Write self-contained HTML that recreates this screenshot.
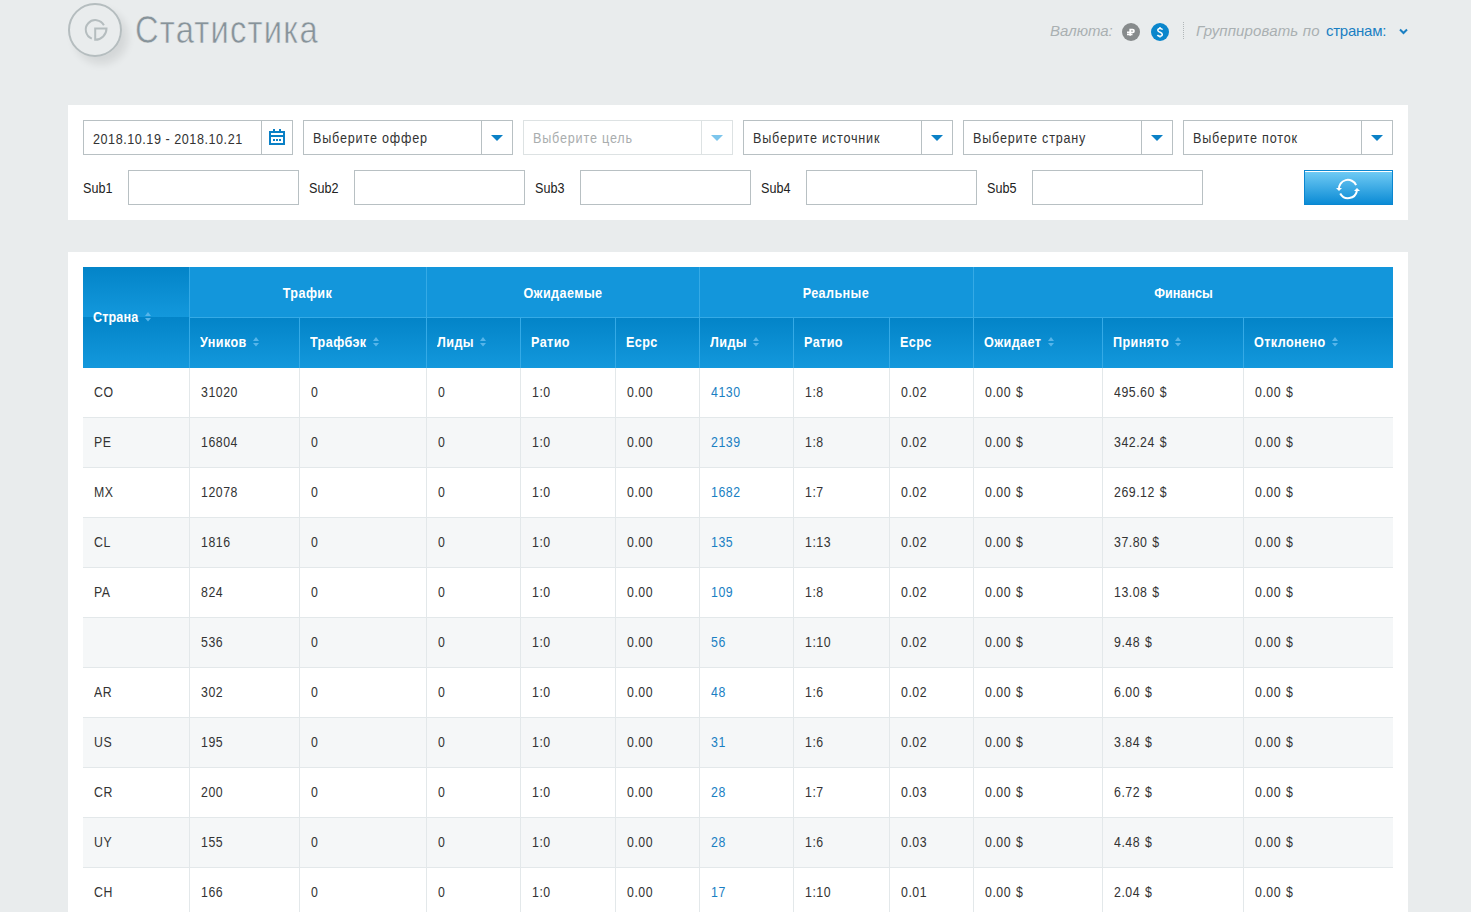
<!DOCTYPE html>
<html><head><meta charset="utf-8"><title>Статистика</title>
<style>
*{margin:0;padding:0;box-sizing:border-box}
html,body{width:1471px;height:912px;overflow:hidden;background:#e9eced;font-family:"Liberation Sans",sans-serif;position:relative}
.a{position:absolute}
.t{position:absolute;white-space:nowrap;line-height:1}
.panel{position:absolute;background:#fff}
.sel{position:absolute;border:1px solid #b8c0c3;background:#fff}
.sel .div{position:absolute;top:0;bottom:0;left:177px;width:1px;background:#b8c0c3}
.sel .arr{position:absolute;left:187px;top:14px;width:0;height:0;border-left:6px solid transparent;border-right:6px solid transparent;border-top:6px solid #0a80c6}
.sel .txt{position:absolute;left:9px;top:10px;font-size:14px;letter-spacing:0.9px;transform:scaleX(0.9);transform-origin:0 0;color:#333;white-space:nowrap;line-height:1}
.sel.dis{border-color:#dde2e3}
.sel.dis .div{background:#dde2e3}
.sel.dis .arr{border-top-color:#7cc5ec}
.sel.dis .txt{color:#a9adae}
.inp{position:absolute;border:1px solid #b8c0c3;background:#fff}
.lab{position:absolute;font-size:15px;transform:scaleX(0.84);transform-origin:0 0;color:#222;white-space:nowrap;line-height:1}
.hc{position:absolute;color:#fff;font-weight:bold;font-size:14px;white-space:nowrap;line-height:1}
.hs{display:inline-block;letter-spacing:0.45px;transform:scaleX(0.9);transform-origin:0 0}
.hg{display:inline-block;letter-spacing:0.45px;transform:scaleX(0.9);transform-origin:50% 0}
.cell{position:absolute;font-size:14px;letter-spacing:0.6px;word-spacing:1px;transform:scaleX(0.88);transform-origin:0 0;color:#333;white-space:nowrap;line-height:1}
.sort{position:absolute}
</style></head><body>

<div class="a" style="left:68px;top:3px;width:54px;height:54px;border-radius:50%;box-shadow:6px 7px 8px rgba(0,0,0,0.09)"></div>
<svg class="a" style="left:68px;top:3px" width="54" height="54" viewBox="0 0 54 54">
<circle cx="27" cy="27" r="26" fill="none" stroke="#b5bdbf" stroke-width="2"/>
<path d="M35.9 22.3 A9.6 9.6 0 1 0 23.8 35.6" fill="none" stroke="#b5bdbf" stroke-width="2"/>
<path d="M27.2 25.5 H38.5 A11.3 11.3 0 0 1 27.2 36.8 Z" fill="none" stroke="#b5bdbf" stroke-width="2"/>
</svg>
<div class="t" style="left:135px;top:11px;font-size:38.5px;letter-spacing:1.4px;transform:scaleX(0.85);transform-origin:0 0;color:#87939a;-webkit-text-stroke:0.55px #e9eced">Статистика</div>
<div class="t" style="left:1050px;top:23px;font-size:15px;font-style:italic;color:#a9b0b2">Валюта:</div>
<div class="a" style="left:1122px;top:23px;width:18px;height:18px;border-radius:50%;background:#878b8c"></div>
<svg class="a" style="left:1122px;top:23px" width="18" height="18" viewBox="0 0 18 18"><path d="M8.2 12.8V6.6H10.6A1.4 1.4 0 0 1 10.6 9.4H5 M5 11.5H10.5" fill="none" stroke="#fff" stroke-width="1.7"/></svg>
<div class="a" style="left:1151px;top:23px;width:18px;height:18px;border-radius:50%;background:#0a86cc"></div>
<svg class="a" style="left:1151px;top:23px" width="18" height="18" viewBox="0 0 18 18"><path d="M11.6 6.6 C11 5.7 10 5.4 9 5.4 C7.6 5.4 6.8 6.2 6.8 7.2 C6.8 8.3 7.8 8.8 9.1 9.3 C10.5 9.9 11.3 10.5 11.3 11.6 C11.3 12.7 10.3 13.3 9 13.3 C7.9 13.3 7 12.9 6.4 12 M9 4 V5.4 M9 13.3 V14.4" fill="none" stroke="#fff" stroke-width="1.5"/></svg>
<div class="a" style="left:1183px;top:22px;width:1px;height:17px;background-image:linear-gradient(#b0b6b8 50%,transparent 50%);background-size:1px 2px"></div>
<div class="t" style="left:1196px;top:23px;font-size:15px;letter-spacing:0.15px;font-style:italic;color:#a9b0b2">Группировать по</div>
<div class="t" style="left:1326px;top:23px;font-size:15px;letter-spacing:-0.25px;color:#1a7fc3">странам:</div>
<svg class="a" style="left:1399px;top:28px" width="9" height="7" viewBox="0 0 9 7"><path d="M1 1.5L4.5 5L8 1.5" fill="none" stroke="#1a7fc3" stroke-width="2"/></svg>
<div class="panel" style="left:68px;top:105px;width:1340px;height:115px"></div>
<div class="sel" style="left:83px;top:120px;width:210px;height:35px"><div class="div"></div><div class="txt" style="left:9px;top:11px;letter-spacing:0.6px">2018.10.19 - 2018.10.21</div>
<svg class="a" style="left:185px;top:8px" width="16" height="16" viewBox="0 0 16 16"><path d="M0 2H16V16H0Z M2 4V6H14V4Z M2 8V14H14V8Z M4 0H6V2H4Z M10 0H12V2H10Z M4 10H6V12H4Z M7 10H9V12H7Z M10 10H12V12H10Z" fill="#0a80c6" fill-rule="evenodd"/></svg></div>
<div class="sel" style="left:303px;top:120px;width:210px;height:35px"><div class="div"></div><div class="arr"></div><div class="txt">Выберите оффер</div></div>
<div class="sel dis" style="left:523px;top:120px;width:210px;height:35px"><div class="div"></div><div class="arr"></div><div class="txt">Выберите цель</div></div>
<div class="sel" style="left:743px;top:120px;width:210px;height:35px"><div class="div"></div><div class="arr"></div><div class="txt">Выберите источник</div></div>
<div class="sel" style="left:963px;top:120px;width:210px;height:35px"><div class="div"></div><div class="arr"></div><div class="txt">Выберите страну</div></div>
<div class="sel" style="left:1183px;top:120px;width:210px;height:35px"><div class="div"></div><div class="arr"></div><div class="txt">Выберите поток</div></div>
<div class="lab" style="left:82.5px;top:180px">Sub1</div>
<div class="inp" style="left:128px;top:170px;width:171px;height:35px"></div>
<div class="lab" style="left:308.5px;top:180px">Sub2</div>
<div class="inp" style="left:354px;top:170px;width:171px;height:35px"></div>
<div class="lab" style="left:534.5px;top:180px">Sub3</div>
<div class="inp" style="left:580px;top:170px;width:171px;height:35px"></div>
<div class="lab" style="left:760.5px;top:180px">Sub4</div>
<div class="inp" style="left:806px;top:170px;width:171px;height:35px"></div>
<div class="lab" style="left:986.5px;top:180px">Sub5</div>
<div class="inp" style="left:1032px;top:170px;width:171px;height:35px"></div>
<div class="a" style="left:1304px;top:170px;width:89px;height:35px;border:1px solid #0a86d0;background:linear-gradient(#72ccf5,#0b8bd5);box-shadow:inset 0 1px 0 #fff"></div>
<svg class="a" style="left:1325px;top:172px" width="45" height="31" viewBox="0 0 45 31">
<path d="M13.9 17.5 A9 9 0 0 1 31.1 13.2" fill="none" stroke="#fff" stroke-width="2"/>
<path d="M31.9 19 A9 9 0 0 1 15.2 21.5" fill="none" stroke="#fff" stroke-width="2"/>
<path d="M11 16H17L14 19Z" fill="#fff"/>
<path d="M29 19H35L32 16Z" fill="#fff"/>
</svg>
<div class="panel" style="left:68px;top:252px;width:1340px;height:700px"></div>
<div class="a" style="left:83px;top:267px;width:1310px;height:101px;background:#1396db"></div>
<div class="a" style="left:83px;top:267px;width:106px;height:100px;background:linear-gradient(#0384c8,#1398dc);background-size:106px 50px"></div>
<div class="a" style="left:190px;top:318px;width:1203px;height:50px;background:linear-gradient(#0384c8,#1398dc)"></div>
<div class="a" style="left:190px;top:317px;width:1203px;height:1px;background:#35aae6"></div>
<div class="a" style="left:189px;top:267px;width:1px;height:101px;background:#35aae6"></div>
<div class="a" style="left:299px;top:317px;width:1px;height:51px;background:#35aae6"></div>
<div class="a" style="left:426px;top:267px;width:1px;height:101px;background:#35aae6"></div>
<div class="a" style="left:520px;top:317px;width:1px;height:51px;background:#35aae6"></div>
<div class="a" style="left:615px;top:317px;width:1px;height:51px;background:#35aae6"></div>
<div class="a" style="left:699px;top:267px;width:1px;height:101px;background:#35aae6"></div>
<div class="a" style="left:793px;top:317px;width:1px;height:51px;background:#35aae6"></div>
<div class="a" style="left:889px;top:317px;width:1px;height:51px;background:#35aae6"></div>
<div class="a" style="left:973px;top:267px;width:1px;height:101px;background:#35aae6"></div>
<div class="a" style="left:1102px;top:317px;width:1px;height:51px;background:#35aae6"></div>
<div class="a" style="left:1243px;top:317px;width:1px;height:51px;background:#35aae6"></div>
<div class="hc" style="left:93px;top:310px"><span class="hs" style="letter-spacing:0.15px">Страна</span></div>
<svg class="sort" style="left:144.6px;top:312px" width="6" height="10" viewBox="0 0 6 10"><path d="M3 0L6 4H0Z M0 6H6L3 9.5Z" fill="#57b5ea"/></svg>
<div class="hc" style="left:189px;width:237px;text-align:center;top:286px;"><span class="hg" style="">Трафик</span></div>
<div class="hc" style="left:426px;width:273px;text-align:center;top:286px;"><span class="hg" style="">Ожидаемые</span></div>
<div class="hc" style="left:699px;width:274px;text-align:center;top:286px;"><span class="hg" style="">Реальные</span></div>
<div class="hc" style="left:973px;width:420px;text-align:center;top:286px;"><span class="hg" style="letter-spacing:0px;">Финансы</span></div>
<div class="hc" style="left:200px;top:335px"><span class="hs">Уников</span></div>
<svg class="sort" style="left:252.9px;top:337px" width="6" height="10" viewBox="0 0 6 10"><path d="M3 0L6 4H0Z M0 6H6L3 9.5Z" fill="#57b5ea"/></svg>
<div class="hc" style="left:310px;top:335px"><span class="hs">Трафбэк</span></div>
<svg class="sort" style="left:372.7px;top:337px" width="6" height="10" viewBox="0 0 6 10"><path d="M3 0L6 4H0Z M0 6H6L3 9.5Z" fill="#57b5ea"/></svg>
<div class="hc" style="left:437px;top:335px"><span class="hs">Лиды</span></div>
<svg class="sort" style="left:480.2px;top:337px" width="6" height="10" viewBox="0 0 6 10"><path d="M3 0L6 4H0Z M0 6H6L3 9.5Z" fill="#57b5ea"/></svg>
<div class="hc" style="left:531px;top:335px"><span class="hs">Ратио</span></div>
<div class="hc" style="left:626px;top:335px"><span class="hs">Ecpc</span></div>
<div class="hc" style="left:710px;top:335px"><span class="hs">Лиды</span></div>
<svg class="sort" style="left:753.2px;top:337px" width="6" height="10" viewBox="0 0 6 10"><path d="M3 0L6 4H0Z M0 6H6L3 9.5Z" fill="#57b5ea"/></svg>
<div class="hc" style="left:804px;top:335px"><span class="hs">Ратио</span></div>
<div class="hc" style="left:900px;top:335px"><span class="hs">Ecpc</span></div>
<div class="hc" style="left:984px;top:335px"><span class="hs">Ожидает</span></div>
<svg class="sort" style="left:1047.5px;top:337px" width="6" height="10" viewBox="0 0 6 10"><path d="M3 0L6 4H0Z M0 6H6L3 9.5Z" fill="#57b5ea"/></svg>
<div class="hc" style="left:1113px;top:335px"><span class="hs">Принято</span></div>
<svg class="sort" style="left:1175.2px;top:337px" width="6" height="10" viewBox="0 0 6 10"><path d="M3 0L6 4H0Z M0 6H6L3 9.5Z" fill="#57b5ea"/></svg>
<div class="hc" style="left:1254px;top:335px"><span class="hs">Отклонено</span></div>
<svg class="sort" style="left:1331.8px;top:337px" width="6" height="10" viewBox="0 0 6 10"><path d="M3 0L6 4H0Z M0 6H6L3 9.5Z" fill="#57b5ea"/></svg>
<div class="a" style="left:83px;top:368px;width:1310px;height:49px;background:#fff"></div>
<div class="a" style="left:83px;top:417px;width:1310px;height:1px;background:#e3e8ea"></div>
<div class="a" style="left:83px;top:418px;width:1310px;height:49px;background:#f5f7f8"></div>
<div class="a" style="left:83px;top:467px;width:1310px;height:1px;background:#e3e8ea"></div>
<div class="a" style="left:83px;top:468px;width:1310px;height:49px;background:#fff"></div>
<div class="a" style="left:83px;top:517px;width:1310px;height:1px;background:#e3e8ea"></div>
<div class="a" style="left:83px;top:518px;width:1310px;height:49px;background:#f5f7f8"></div>
<div class="a" style="left:83px;top:567px;width:1310px;height:1px;background:#e3e8ea"></div>
<div class="a" style="left:83px;top:568px;width:1310px;height:49px;background:#fff"></div>
<div class="a" style="left:83px;top:617px;width:1310px;height:1px;background:#e3e8ea"></div>
<div class="a" style="left:83px;top:618px;width:1310px;height:49px;background:#f5f7f8"></div>
<div class="a" style="left:83px;top:667px;width:1310px;height:1px;background:#e3e8ea"></div>
<div class="a" style="left:83px;top:668px;width:1310px;height:49px;background:#fff"></div>
<div class="a" style="left:83px;top:717px;width:1310px;height:1px;background:#e3e8ea"></div>
<div class="a" style="left:83px;top:718px;width:1310px;height:49px;background:#f5f7f8"></div>
<div class="a" style="left:83px;top:767px;width:1310px;height:1px;background:#e3e8ea"></div>
<div class="a" style="left:83px;top:768px;width:1310px;height:49px;background:#fff"></div>
<div class="a" style="left:83px;top:817px;width:1310px;height:1px;background:#e3e8ea"></div>
<div class="a" style="left:83px;top:818px;width:1310px;height:49px;background:#f5f7f8"></div>
<div class="a" style="left:83px;top:867px;width:1310px;height:1px;background:#e3e8ea"></div>
<div class="a" style="left:83px;top:868px;width:1310px;height:49px;background:#fff"></div>
<div class="a" style="left:83px;top:917px;width:1310px;height:1px;background:#e3e8ea"></div>
<div class="a" style="left:189px;top:368px;width:1px;height:600px;background:#e3e8ea"></div>
<div class="a" style="left:299px;top:368px;width:1px;height:600px;background:#e3e8ea"></div>
<div class="a" style="left:426px;top:368px;width:1px;height:600px;background:#e3e8ea"></div>
<div class="a" style="left:520px;top:368px;width:1px;height:600px;background:#e3e8ea"></div>
<div class="a" style="left:615px;top:368px;width:1px;height:600px;background:#e3e8ea"></div>
<div class="a" style="left:699px;top:368px;width:1px;height:600px;background:#e3e8ea"></div>
<div class="a" style="left:793px;top:368px;width:1px;height:600px;background:#e3e8ea"></div>
<div class="a" style="left:889px;top:368px;width:1px;height:600px;background:#e3e8ea"></div>
<div class="a" style="left:973px;top:368px;width:1px;height:600px;background:#e3e8ea"></div>
<div class="a" style="left:1102px;top:368px;width:1px;height:600px;background:#e3e8ea"></div>
<div class="a" style="left:1243px;top:368px;width:1px;height:600px;background:#e3e8ea"></div>
<div class="cell" style="left:94px;top:385px;color:#333">CO</div>
<div class="cell" style="left:200.7px;top:385px;color:#333">31020</div>
<div class="cell" style="left:310.7px;top:385px;color:#333">0</div>
<div class="cell" style="left:437.7px;top:385px;color:#333">0</div>
<div class="cell" style="left:531.7px;top:385px;color:#333">1:0</div>
<div class="cell" style="left:626.7px;top:385px;color:#333">0.00</div>
<div class="cell" style="left:710.7px;top:385px;color:#1a7fc3">4130</div>
<div class="cell" style="left:804.7px;top:385px;color:#333">1:8</div>
<div class="cell" style="left:900.7px;top:385px;color:#333">0.02</div>
<div class="cell" style="left:984.7px;top:385px;color:#333">0.00 $</div>
<div class="cell" style="left:1113.7px;top:385px;color:#333">495.60 $</div>
<div class="cell" style="left:1254.7px;top:385px;color:#333">0.00 $</div>
<div class="cell" style="left:94px;top:435px;color:#333">PE</div>
<div class="cell" style="left:200.7px;top:435px;color:#333">16804</div>
<div class="cell" style="left:310.7px;top:435px;color:#333">0</div>
<div class="cell" style="left:437.7px;top:435px;color:#333">0</div>
<div class="cell" style="left:531.7px;top:435px;color:#333">1:0</div>
<div class="cell" style="left:626.7px;top:435px;color:#333">0.00</div>
<div class="cell" style="left:710.7px;top:435px;color:#1a7fc3">2139</div>
<div class="cell" style="left:804.7px;top:435px;color:#333">1:8</div>
<div class="cell" style="left:900.7px;top:435px;color:#333">0.02</div>
<div class="cell" style="left:984.7px;top:435px;color:#333">0.00 $</div>
<div class="cell" style="left:1113.7px;top:435px;color:#333">342.24 $</div>
<div class="cell" style="left:1254.7px;top:435px;color:#333">0.00 $</div>
<div class="cell" style="left:94px;top:485px;color:#333">MX</div>
<div class="cell" style="left:200.7px;top:485px;color:#333">12078</div>
<div class="cell" style="left:310.7px;top:485px;color:#333">0</div>
<div class="cell" style="left:437.7px;top:485px;color:#333">0</div>
<div class="cell" style="left:531.7px;top:485px;color:#333">1:0</div>
<div class="cell" style="left:626.7px;top:485px;color:#333">0.00</div>
<div class="cell" style="left:710.7px;top:485px;color:#1a7fc3">1682</div>
<div class="cell" style="left:804.7px;top:485px;color:#333">1:7</div>
<div class="cell" style="left:900.7px;top:485px;color:#333">0.02</div>
<div class="cell" style="left:984.7px;top:485px;color:#333">0.00 $</div>
<div class="cell" style="left:1113.7px;top:485px;color:#333">269.12 $</div>
<div class="cell" style="left:1254.7px;top:485px;color:#333">0.00 $</div>
<div class="cell" style="left:94px;top:535px;color:#333">CL</div>
<div class="cell" style="left:200.7px;top:535px;color:#333">1816</div>
<div class="cell" style="left:310.7px;top:535px;color:#333">0</div>
<div class="cell" style="left:437.7px;top:535px;color:#333">0</div>
<div class="cell" style="left:531.7px;top:535px;color:#333">1:0</div>
<div class="cell" style="left:626.7px;top:535px;color:#333">0.00</div>
<div class="cell" style="left:710.7px;top:535px;color:#1a7fc3">135</div>
<div class="cell" style="left:804.7px;top:535px;color:#333">1:13</div>
<div class="cell" style="left:900.7px;top:535px;color:#333">0.02</div>
<div class="cell" style="left:984.7px;top:535px;color:#333">0.00 $</div>
<div class="cell" style="left:1113.7px;top:535px;color:#333">37.80 $</div>
<div class="cell" style="left:1254.7px;top:535px;color:#333">0.00 $</div>
<div class="cell" style="left:94px;top:585px;color:#333">PA</div>
<div class="cell" style="left:200.7px;top:585px;color:#333">824</div>
<div class="cell" style="left:310.7px;top:585px;color:#333">0</div>
<div class="cell" style="left:437.7px;top:585px;color:#333">0</div>
<div class="cell" style="left:531.7px;top:585px;color:#333">1:0</div>
<div class="cell" style="left:626.7px;top:585px;color:#333">0.00</div>
<div class="cell" style="left:710.7px;top:585px;color:#1a7fc3">109</div>
<div class="cell" style="left:804.7px;top:585px;color:#333">1:8</div>
<div class="cell" style="left:900.7px;top:585px;color:#333">0.02</div>
<div class="cell" style="left:984.7px;top:585px;color:#333">0.00 $</div>
<div class="cell" style="left:1113.7px;top:585px;color:#333">13.08 $</div>
<div class="cell" style="left:1254.7px;top:585px;color:#333">0.00 $</div>
<div class="cell" style="left:94px;top:635px;color:#333"></div>
<div class="cell" style="left:200.7px;top:635px;color:#333">536</div>
<div class="cell" style="left:310.7px;top:635px;color:#333">0</div>
<div class="cell" style="left:437.7px;top:635px;color:#333">0</div>
<div class="cell" style="left:531.7px;top:635px;color:#333">1:0</div>
<div class="cell" style="left:626.7px;top:635px;color:#333">0.00</div>
<div class="cell" style="left:710.7px;top:635px;color:#1a7fc3">56</div>
<div class="cell" style="left:804.7px;top:635px;color:#333">1:10</div>
<div class="cell" style="left:900.7px;top:635px;color:#333">0.02</div>
<div class="cell" style="left:984.7px;top:635px;color:#333">0.00 $</div>
<div class="cell" style="left:1113.7px;top:635px;color:#333">9.48 $</div>
<div class="cell" style="left:1254.7px;top:635px;color:#333">0.00 $</div>
<div class="cell" style="left:94px;top:685px;color:#333">AR</div>
<div class="cell" style="left:200.7px;top:685px;color:#333">302</div>
<div class="cell" style="left:310.7px;top:685px;color:#333">0</div>
<div class="cell" style="left:437.7px;top:685px;color:#333">0</div>
<div class="cell" style="left:531.7px;top:685px;color:#333">1:0</div>
<div class="cell" style="left:626.7px;top:685px;color:#333">0.00</div>
<div class="cell" style="left:710.7px;top:685px;color:#1a7fc3">48</div>
<div class="cell" style="left:804.7px;top:685px;color:#333">1:6</div>
<div class="cell" style="left:900.7px;top:685px;color:#333">0.02</div>
<div class="cell" style="left:984.7px;top:685px;color:#333">0.00 $</div>
<div class="cell" style="left:1113.7px;top:685px;color:#333">6.00 $</div>
<div class="cell" style="left:1254.7px;top:685px;color:#333">0.00 $</div>
<div class="cell" style="left:94px;top:735px;color:#333">US</div>
<div class="cell" style="left:200.7px;top:735px;color:#333">195</div>
<div class="cell" style="left:310.7px;top:735px;color:#333">0</div>
<div class="cell" style="left:437.7px;top:735px;color:#333">0</div>
<div class="cell" style="left:531.7px;top:735px;color:#333">1:0</div>
<div class="cell" style="left:626.7px;top:735px;color:#333">0.00</div>
<div class="cell" style="left:710.7px;top:735px;color:#1a7fc3">31</div>
<div class="cell" style="left:804.7px;top:735px;color:#333">1:6</div>
<div class="cell" style="left:900.7px;top:735px;color:#333">0.02</div>
<div class="cell" style="left:984.7px;top:735px;color:#333">0.00 $</div>
<div class="cell" style="left:1113.7px;top:735px;color:#333">3.84 $</div>
<div class="cell" style="left:1254.7px;top:735px;color:#333">0.00 $</div>
<div class="cell" style="left:94px;top:785px;color:#333">CR</div>
<div class="cell" style="left:200.7px;top:785px;color:#333">200</div>
<div class="cell" style="left:310.7px;top:785px;color:#333">0</div>
<div class="cell" style="left:437.7px;top:785px;color:#333">0</div>
<div class="cell" style="left:531.7px;top:785px;color:#333">1:0</div>
<div class="cell" style="left:626.7px;top:785px;color:#333">0.00</div>
<div class="cell" style="left:710.7px;top:785px;color:#1a7fc3">28</div>
<div class="cell" style="left:804.7px;top:785px;color:#333">1:7</div>
<div class="cell" style="left:900.7px;top:785px;color:#333">0.03</div>
<div class="cell" style="left:984.7px;top:785px;color:#333">0.00 $</div>
<div class="cell" style="left:1113.7px;top:785px;color:#333">6.72 $</div>
<div class="cell" style="left:1254.7px;top:785px;color:#333">0.00 $</div>
<div class="cell" style="left:94px;top:835px;color:#333">UY</div>
<div class="cell" style="left:200.7px;top:835px;color:#333">155</div>
<div class="cell" style="left:310.7px;top:835px;color:#333">0</div>
<div class="cell" style="left:437.7px;top:835px;color:#333">0</div>
<div class="cell" style="left:531.7px;top:835px;color:#333">1:0</div>
<div class="cell" style="left:626.7px;top:835px;color:#333">0.00</div>
<div class="cell" style="left:710.7px;top:835px;color:#1a7fc3">28</div>
<div class="cell" style="left:804.7px;top:835px;color:#333">1:6</div>
<div class="cell" style="left:900.7px;top:835px;color:#333">0.03</div>
<div class="cell" style="left:984.7px;top:835px;color:#333">0.00 $</div>
<div class="cell" style="left:1113.7px;top:835px;color:#333">4.48 $</div>
<div class="cell" style="left:1254.7px;top:835px;color:#333">0.00 $</div>
<div class="cell" style="left:94px;top:885px;color:#333">CH</div>
<div class="cell" style="left:200.7px;top:885px;color:#333">166</div>
<div class="cell" style="left:310.7px;top:885px;color:#333">0</div>
<div class="cell" style="left:437.7px;top:885px;color:#333">0</div>
<div class="cell" style="left:531.7px;top:885px;color:#333">1:0</div>
<div class="cell" style="left:626.7px;top:885px;color:#333">0.00</div>
<div class="cell" style="left:710.7px;top:885px;color:#1a7fc3">17</div>
<div class="cell" style="left:804.7px;top:885px;color:#333">1:10</div>
<div class="cell" style="left:900.7px;top:885px;color:#333">0.01</div>
<div class="cell" style="left:984.7px;top:885px;color:#333">0.00 $</div>
<div class="cell" style="left:1113.7px;top:885px;color:#333">2.04 $</div>
<div class="cell" style="left:1254.7px;top:885px;color:#333">0.00 $</div>
</body></html>
